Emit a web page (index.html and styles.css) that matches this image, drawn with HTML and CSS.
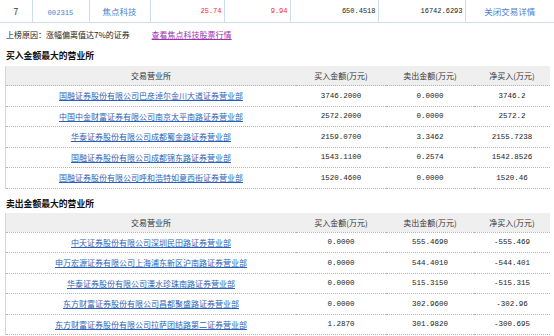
FILE: index.html
```html
<!DOCTYPE html>
<html lang="zh-CN">
<head>
    <meta charset="UTF-8">
    <title>龙虎榜明细</title>
    <link rel="stylesheet" href="styles.css">
</head>
<body>
<!-- 股票行 -->
<table class="stock-row">
    <colgroup>
        <col style="width:32px"><col style="width:57px"><col style="width:61px"><col style="width:74px">
        <col style="width:66px"><col style="width:88px"><col style="width:87px"><col style="width:89px">
    </colgroup>
    <tr>
        <td class="c">7</td>
        <td class="c"><a class="code">002315</a></td>
        <td class="c"><a class="name">焦点科技</a></td>
        <td class="r num red">25.74</td>
        <td class="r num red">9.94</td>
        <td class="r num">650.4518</td>
        <td class="r num">16742.6293</td>
        <td class="c"><a class="name">关闭交易详情</a></td>
    </tr>
</table>

<div class="reason">
    上榜原因：涨幅偏离值达7%的证券
    <a class="quote-link">查看焦点科技股票行情</a>
</div>

<!-- 买入 -->
<div class="sec-title">买入金额最大的营业所</div>
<table class="dept-table">
    <thead>
    <tr>
        <th class="col-name">交易营业所</th>
        <th class="col-buy">买入金额(万元)</th>
        <th class="col-sell">卖出金额(万元)</th>
        <th class="col-net">净买入(万元)</th>
    </tr>
    </thead>
    <tbody>
    <tr><td><a>国融证券股份有限公司巴彦淖尔金川大道证券营业部</a></td><td class="num">3746.2000</td><td class="num">0.0000</td><td class="num">3746.2</td></tr>
    <tr><td><a>中国中金财富证券有限公司南京太平南路证券营业部</a></td><td class="num">2572.2000</td><td class="num">0.0000</td><td class="num">2572.2</td></tr>
    <tr><td><a>华泰证券股份有限公司成都蜀金路证券营业部</a></td><td class="num">2159.0700</td><td class="num">3.3462</td><td class="num">2155.7238</td></tr>
    <tr><td><a>国融证券股份有限公司成都锦东路证券营业部</a></td><td class="num">1543.1100</td><td class="num">0.2574</td><td class="num">1542.8526</td></tr>
    <tr><td><a>国融证券股份有限公司呼和浩特如意西街证券营业部</a></td><td class="num">1520.4600</td><td class="num">0.0000</td><td class="num">1520.46</td></tr>
    </tbody>
</table>

<!-- 卖出 -->
<div class="sec-title second">卖出金额最大的营业所</div>
<table class="dept-table">
    <thead>
    <tr>
        <th class="col-name">交易营业所</th>
        <th class="col-buy">买入金额(万元)</th>
        <th class="col-sell">卖出金额(万元)</th>
        <th class="col-net">净买入(万元)</th>
    </tr>
    </thead>
    <tbody>
    <tr><td><a>中天证券股份有限公司深圳民田路证券营业部</a></td><td class="num">0.0000</td><td class="num">555.4690</td><td class="num">-555.469</td></tr>
    <tr><td><a>申万宏源证券有限公司上海浦东新区沪南路证券营业部</a></td><td class="num">0.0000</td><td class="num">544.4010</td><td class="num">-544.401</td></tr>
    <tr><td><a>华泰证券股份有限公司溧水珍珠南路证券营业部</a></td><td class="num">0.0000</td><td class="num">515.3150</td><td class="num">-515.315</td></tr>
    <tr><td><a>东方财富证券股份有限公司昌都聚盛路证券营业部</a></td><td class="num">0.0000</td><td class="num">302.9600</td><td class="num">-302.96</td></tr>
    <tr><td><a>东方财富证券股份有限公司拉萨团结路第二证券营业部</a></td><td class="num">1.2870</td><td class="num">301.9820</td><td class="num">-300.695</td></tr>
    </tbody>
</table>
</body>
</html>
```

FILE: styles.css
```css
body {
    margin: 0;
    font-family: "Noto Sans CJK SC", "Liberation Sans", sans-serif;
    font-size: 8px;
    color: #333;
    background: #fff;
}
a {
    cursor: pointer;
}

/* 顶部股票行 */
.stock-row {
    width: 554px;
    border-collapse: collapse;
    table-layout: fixed;
}
.stock-row td {
    height: 22px;
    padding: 0 2px;
    border-left: 1px solid #cddcee;
    border-right: 1px solid #cddcee;
    border-bottom: 1px solid #cddcee;
    font-size: 8.5px;
    white-space: nowrap;
}
.stock-row td:first-child {
    border-left: none;
}
.stock-row td:last-child {
    border-right: none;
}
.stock-row .c {
    text-align: center;
}
.stock-row .r {
    text-align: right;
}
.stock-row .num {
    font-family: "Liberation Mono", monospace;
    font-size: 7px;
    color: #222;
}
.stock-row .red {
    color: #f22;
}
.stock-row .code {
    color: #4d80cf;
    font-family: "Liberation Mono", monospace;
    font-size: 7.2px;
}
.stock-row .name {
    color: #4d80cf;
}

/* 上榜原因 */
.reason {
    margin-top: 4px;
    padding-left: 6px;
    line-height: 16px;
    color: #222;
}
.quote-link {
    margin-left: 20px;
    color: #9c2fb0;
    text-decoration: underline;
}

.sec-title {
    margin-top: 5px;
    padding-left: 6px;
    line-height: 16px;
    font-size: 8.8px;
    font-weight: bold;
    color: #111;
}
.sec-title.second {
    margin-top: 7px;
}

/* 营业所表格 */
.dept-table {
    width: 544px;
    margin: 2px 0 0 5px;
    border-collapse: collapse;
    table-layout: fixed;
    border-left: 1px solid #d6d6d6;
}
.sec-title.second + .dept-table {
    margin-top: 1px;
}
.dept-table .col-name { width: 290px; }
.dept-table .col-buy { width: 90px; }
.dept-table .col-sell { width: 88px; }
.dept-table .col-net { width: 76px; }
.dept-table th {
    height: 19px;
    padding: 0;
    background: #efefef;
    font-weight: normal;
    color: #333;
    border-bottom: 1px dotted #b4b4b4;
}
.dept-table td {
    height: 19.5px;
    padding: 0;
    text-align: center;
    border-bottom: 1px dotted #b4b4b4;
    white-space: nowrap;
}
.dept-table td a {
    color: #2b5fb8;
    text-decoration: underline;
}
.dept-table .num {
    font-family: "Liberation Mono", monospace;
    font-size: 7.5px;
    color: #222;
}
```
